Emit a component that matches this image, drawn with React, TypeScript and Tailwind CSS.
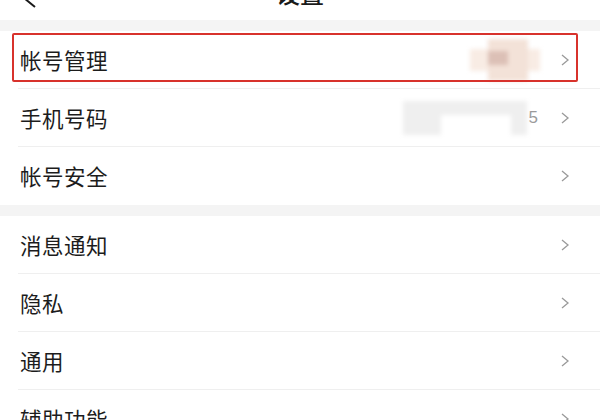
import React from 'react';

type Row = { label: string; extra?: React.ReactNode };

function Chevron() {
  return (
    <svg width="10" height="14" viewBox="0 0 10 14" className="shrink-0">
      <path d="M2 2 L8 7 L2 12" fill="none" stroke="#9a9a9a" strokeWidth="1.3" />
    </svg>
  );
}

// pixelated, blurred avatar placeholder
function BlurAvatar() {
  return (
    <div className="mr-[20px] flex items-center blur-[2px]">
      <div className="w-[18px] h-[22px] bg-[#f8ece4]" />
      <div className="flex flex-col w-[40px] h-[42px] bg-[#f3e2d8]">
        <div className="mt-[12px] w-[20px] h-[14px] bg-[#dcc0b6]" />
      </div>
      <div className="w-[12px] h-[22px] bg-[#f8ece4]" />
    </div>
  );
}

// blurred phone number, last digit visible
function BlurPhone() {
  return (
    <div className="flex items-center mr-[22px]">
      <div className="flex flex-col w-[124px] h-[34px] bg-[#efefef] blur-[2px]">
        <div className="mt-[14px] ml-[38px] w-[70px] h-[20px] bg-white" />
      </div>
      <span className="ml-[2px] text-[17px] text-[#9a9a9a] font-['Liberation_Sans',sans-serif]">5</span>
    </div>
  );
}

function ListRow({ row, last, highlight }: { row: Row; last?: boolean; highlight?: boolean }) {
  return (
    <div className="relative h-[58px] bg-white">
      <div className="flex items-center h-full pl-[20px] pr-[30px]">
        <span className="flex-1 text-[21.5px] text-[#1c1c1c] tracking-[0.5px]">{row.label}</span>
        {row.extra}
        <Chevron />
      </div>
      {!last && <div className="absolute left-[18px] right-0 bottom-0 h-px bg-[#efefef]" />}
      {highlight && (
        <div className="absolute left-[12px] right-[22px] top-[2px] bottom-[7px] border-2 border-[#d8322c] rounded-[2px]" />
      )}
    </div>
  );
}

export default function App() {
  const group1: Row[] = [
    { label: '帐号管理', extra: <BlurAvatar /> },
    { label: '手机号码', extra: <BlurPhone /> },
    { label: '帐号安全' },
  ];
  const group2: Row[] = [
    { label: '消息通知' },
    { label: '隐私' },
    { label: '通用' },
    { label: '辅助功能' },
  ];

  return (
    <div className="w-[600px] h-[420px] overflow-hidden bg-white font-['Noto_Sans_CJK_SC',sans-serif]">
      {/* Header, mostly scrolled off the top */}
      <div className="h-[20px] overflow-hidden bg-white">
        <div className="-mt-[23px] h-[32px] grid grid-cols-[1fr_auto_1fr] items-center">
          <svg width="16" height="28" viewBox="0 0 16 28" className="ml-[22px] mt-[4px]">
            <path d="M13 8 L2 17 L13 26" fill="none" stroke="#1a1a1a" strokeWidth="2" />
          </svg>
          <span className="text-[24px] font-medium text-[#1a1a1a] leading-none">设置</span>
          <div />
        </div>
      </div>
      <div className="h-[11px] bg-[#f4f4f4]" />

      {group1.map((r, i) => (
        <ListRow key={r.label} row={r} last={i === group1.length - 1} highlight={i === 0} />
      ))}

      <div className="h-[11px] bg-[#f4f4f4]" />

      {group2.map((r, i) => (
        <ListRow key={r.label} row={r} last={i === group2.length - 1} />
      ))}
    </div>
  );
}
